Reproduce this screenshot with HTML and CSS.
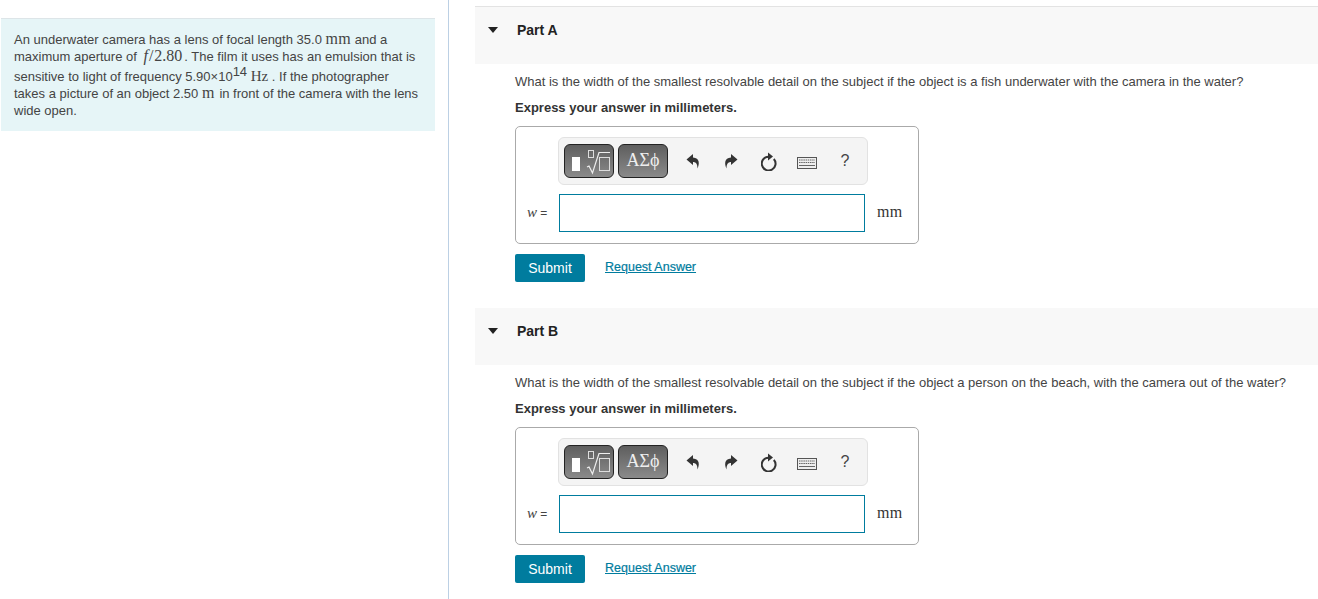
FILE: index.html
```html
<!DOCTYPE html>
<html lang="en">
<head>
    <meta charset="UTF-8">
    <meta name="viewport" content="width=device-width, initial-scale=1.0">
    <title>Part A and Part B</title>
    <link rel="stylesheet" href="styles.css">
</head>
<body>
    <div class="page">
        <aside class="sidebar">
            <div class="intro">
                <p>An underwater camera has a lens of focal length 35.0 <span class="math wide">mm</span> and a</p>
                <p>maximum aperture of <span class="math aperture"><i>f</i><span class="slash">/</span>2.80</span>. The film it uses has an emulsion that is</p>
                <p class="tall-line">sensitive to light of frequency 5.90×10<sup>14</sup> <span class="math">Hz</span> . If the photographer</p>
                <p>takes a picture of an object 2.50 <span class="math wide metre">m</span> in front of the camera with the lens</p>
                <p>wide open.</p>
            </div>
        </aside>

        <main class="parts">
            <section class="part">
                <div class="part-head first">
                    <span class="caret"></span>
                    <h3>Part A</h3>
                </div>
                <div class="part-body">
                    <p class="question">What is the width of the smallest resolvable detail on the subject if the object is a fish underwater with the camera in the water?</p>
                    <p class="express">Express your answer in millimeters.</p>
                    <div class="answer">
                        <div class="toolbar">
                            <button class="tool-btn">
                                <svg width="46" height="28" viewBox="0 0 46 28">
                                    <rect x="6" y="10" width="8" height="14" fill="#fff"/>
                                    <rect x="22.500" y="3.500" width="5" height="7" fill="none" stroke="#ddd"/>
                                    <path d="M21 20l2-1 3.500 7L33 5.500h11" fill="none" stroke="#eee" stroke-width="1.200"/>
                                    <rect x="33.500" y="10.500" width="10" height="13" fill="none" stroke="#ddd"/>
                                </svg>
                            </button>
                            <button class="tool-btn greek">ΑΣϕ</button>
                            <div class="tool-icons">
                                <svg width="14" height="16" viewBox="0 0 14 16"><path d="M7 1L.5 6.500 7 12V9c3 0 4.500 2 4.500 6.500C13.500 11 14 5 7 4.500z" fill="#333"/></svg>
                                <svg width="14" height="16" viewBox="0 0 14 16"><path d="M7 1l6.500 5.500L7 12V9c-3 0-4.500 2-4.500 6.500C.5 11 0 5 7 4.500z" fill="#333"/></svg>
                                <svg width="16" height="19" viewBox="0 0 16 19"><path d="M12.800 7A6.900 6.900 0 1 1 7.500 4.700" fill="none" stroke="#333" stroke-width="2"/><path d="M7 .5v8L12 4.500z" fill="#333"/></svg>
                                <svg class="keys" width="20" height="12" viewBox="0 0 20 12"><rect x=".5" y=".5" width="19" height="11" fill="#eee" stroke="#555"/><path d="M2 3h16M2 5.500h16" stroke="#666" stroke-dasharray="1.500 .7"/><path d="M2 8.500h16" stroke="#666"/></svg>
                                <span class="help">?</span>
                            </div>
                        </div>
                        <div class="input-row">
                            <span class="var"><i>w</i> =</span>
                            <input type="text" class="answer-input">
                            <span class="unit">mm</span>
                        </div>
                    </div>
                    <div class="actions">
                        <button class="submit">Submit</button>
                        <a href="#" class="request">Request Answer</a>
                    </div>
                </div>
            </section>

            <section class="part">
                <div class="part-head">
                    <span class="caret"></span>
                    <h3>Part B</h3>
                </div>
                <div class="part-body">
                    <p class="question">What is the width of the smallest resolvable detail on the subject if the object a person on the beach, with the camera out of the water?</p>
                    <p class="express">Express your answer in millimeters.</p>
                    <div class="answer">
                        <div class="toolbar">
                            <button class="tool-btn">
                                <svg width="46" height="28" viewBox="0 0 46 28">
                                    <rect x="6" y="10" width="8" height="14" fill="#fff"/>
                                    <rect x="22.500" y="3.500" width="5" height="7" fill="none" stroke="#ddd"/>
                                    <path d="M21 20l2-1 3.500 7L33 5.500h11" fill="none" stroke="#eee" stroke-width="1.200"/>
                                    <rect x="33.500" y="10.500" width="10" height="13" fill="none" stroke="#ddd"/>
                                </svg>
                            </button>
                            <button class="tool-btn greek">ΑΣϕ</button>
                            <div class="tool-icons">
                                <svg width="14" height="16" viewBox="0 0 14 16"><path d="M7 1L.5 6.500 7 12V9c3 0 4.500 2 4.500 6.500C13.500 11 14 5 7 4.500z" fill="#333"/></svg>
                                <svg width="14" height="16" viewBox="0 0 14 16"><path d="M7 1l6.500 5.500L7 12V9c-3 0-4.500 2-4.500 6.500C.5 11 0 5 7 4.500z" fill="#333"/></svg>
                                <svg width="16" height="19" viewBox="0 0 16 19"><path d="M12.800 7A6.900 6.900 0 1 1 7.500 4.700" fill="none" stroke="#333" stroke-width="2"/><path d="M7 .5v8L12 4.500z" fill="#333"/></svg>
                                <svg class="keys" width="20" height="12" viewBox="0 0 20 12"><rect x=".5" y=".5" width="19" height="11" fill="#eee" stroke="#555"/><path d="M2 3h16M2 5.500h16" stroke="#666" stroke-dasharray="1.500 .7"/><path d="M2 8.500h16" stroke="#666"/></svg>
                                <span class="help">?</span>
                            </div>
                        </div>
                        <div class="input-row">
                            <span class="var"><i>w</i> =</span>
                            <input type="text" class="answer-input">
                            <span class="unit">mm</span>
                        </div>
                    </div>
                    <div class="actions">
                        <button class="submit">Submit</button>
                        <a href="#" class="request">Request Answer</a>
                    </div>
                </div>
            </section>
        </main>
    </div>
</body>
</html>
```

FILE: styles.css
```css
html, body {
    margin: 0;
    height: 100%;
    overflow: hidden;
}
body {
    font-family: "Liberation Sans", Arial, sans-serif;
    font-size: 13px;
    color: #333;
    background-color: #fff;
}
.page {
    display: flex;
    height: 599px;
}
.sidebar {
    width: 449px;
    flex: none;
    box-sizing: border-box;
    padding: 18px 13px 0 1px;
    border-right: 1px solid #bcd0e4;
}
.intro {
    background-color: #e6f5f7;
    border-top: 1px solid #dde5e8;
    height: 113px;
    box-sizing: border-box;
    padding: 12px 13px 0;
    color: #444;
}
.intro p {
    margin: 0;
    height: 17px;
    line-height: 17px;
    white-space: nowrap;
}
.intro .tall-line {
    height: 20px;
    line-height: 23px;
}
.tall-line sup {
    font-size: 13px;
    line-height: 0;
}
.math {
    font-family: "Liberation Serif", serif;
    font-size: 15px;
    line-height: 0;
}
.wide {
    font-size: 16px;
    letter-spacing: .4px;
}
.metre {
    margin-right: 1px;
}
.aperture {
    font-size: 16px;
}
.aperture i {
    margin: 0 1px 0 3px;
}
.slash {
    margin-right: 1px;
}
.aperture {
    margin-right: 2px;
}
.parts {
    flex: 1;
    padding: 7px 0 0 26px;
}
.part {
    height: 301px;
}
.part-head {
    display: flex;
    align-items: flex-start;
    height: 57px;
    box-sizing: border-box;
    background-color: #f8f8f8;
    padding: 15px 0 0 13px;
}
.first {
    box-shadow: 0 -1px 0 #e3e3e3;
}
.caret {
    width: 0;
    height: 0;
    margin-top: 5px;
    border-left: 5.5px solid transparent;
    border-right: 5.5px solid transparent;
    border-top: 6px solid #222;
}
.part-head h3 {
    margin: 0 0 0 19px;
    font-size: 14px;
    line-height: 16px;
    font-weight: bold;
    color: #222;
}
.part-body {
    padding: 9px 0 0 40px;
}
.question {
    margin: 0;
    line-height: 17px;
    color: #444;
    white-space: nowrap;
}
.express {
    margin: 9px 0 10px;
    line-height: 17px;
    font-weight: bold;
    color: #333;
}
.answer {
    width: 404px;
    height: 118px;
    box-sizing: border-box;
    border: 1px solid #aaa;
    border-radius: 5px;
    padding: 10px 0 0 42px;
}
.toolbar {
    display: flex;
    align-items: center;
    gap: 4px;
    width: 310px;
    height: 48px;
    box-sizing: border-box;
    padding-left: 5px;
    background-color: #f4f4f4;
    border: 1px solid #e2e2e2;
    border-radius: 6px;
}
.tool-btn {
    width: 50px;
    height: 34px;
    padding: 0;
    display: flex;
    align-items: center;
    justify-content: center;
    border: 1px solid #222;
    border-radius: 6px;
    background: linear-gradient(#5e5e5e, #8a8a8a);
    color: #eee;
    font-family: "Liberation Serif", serif;
    font-size: 18px;
}
.greek {
    padding-bottom: 2px;
}
.tool-icons {
    display: grid;
    grid-template-columns: repeat(5, 38px);
    justify-items: center;
    align-items: center;
    margin-left: 2px;
}
.keys {
    margin-top: 4px;
}
.help {
    font-size: 16px;
    color: #444;
}
.input-row {
    display: flex;
    align-items: center;
    margin: 9px 0 0 -31px;
}
.var {
    width: 32px;
    padding-bottom: 2px;
    font-size: 12px;
    color: #444;
}
.var i {
    font-family: "Liberation Serif", serif;
    font-size: 15px;
}
.answer-input {
    width: 306px;
    height: 38px;
    box-sizing: border-box;
    border: 1px solid #007c9e;
    margin: 0;
    padding: 0;
}
.unit {
    margin-left: 12px;
    padding-bottom: 2px;
    font-family: "Liberation Serif", serif;
    font-size: 16px;
    letter-spacing: .4px;
    color: #333;
}
.actions {
    display: flex;
    align-items: center;
    gap: 20px;
    margin-top: 10px;
}
.submit {
    width: 70px;
    height: 28px;
    padding: 0;
    border: none;
    border-radius: 2px;
    background-color: #007c9e;
    color: #fff;
    font-family: "Liberation Sans", Arial, sans-serif;
    font-size: 14px;
}
.request {
    font-size: 12.5px;
    color: #007c9e;
    margin-top: -2px;
    -webkit-text-stroke: .2px #007c9e;
}
```
